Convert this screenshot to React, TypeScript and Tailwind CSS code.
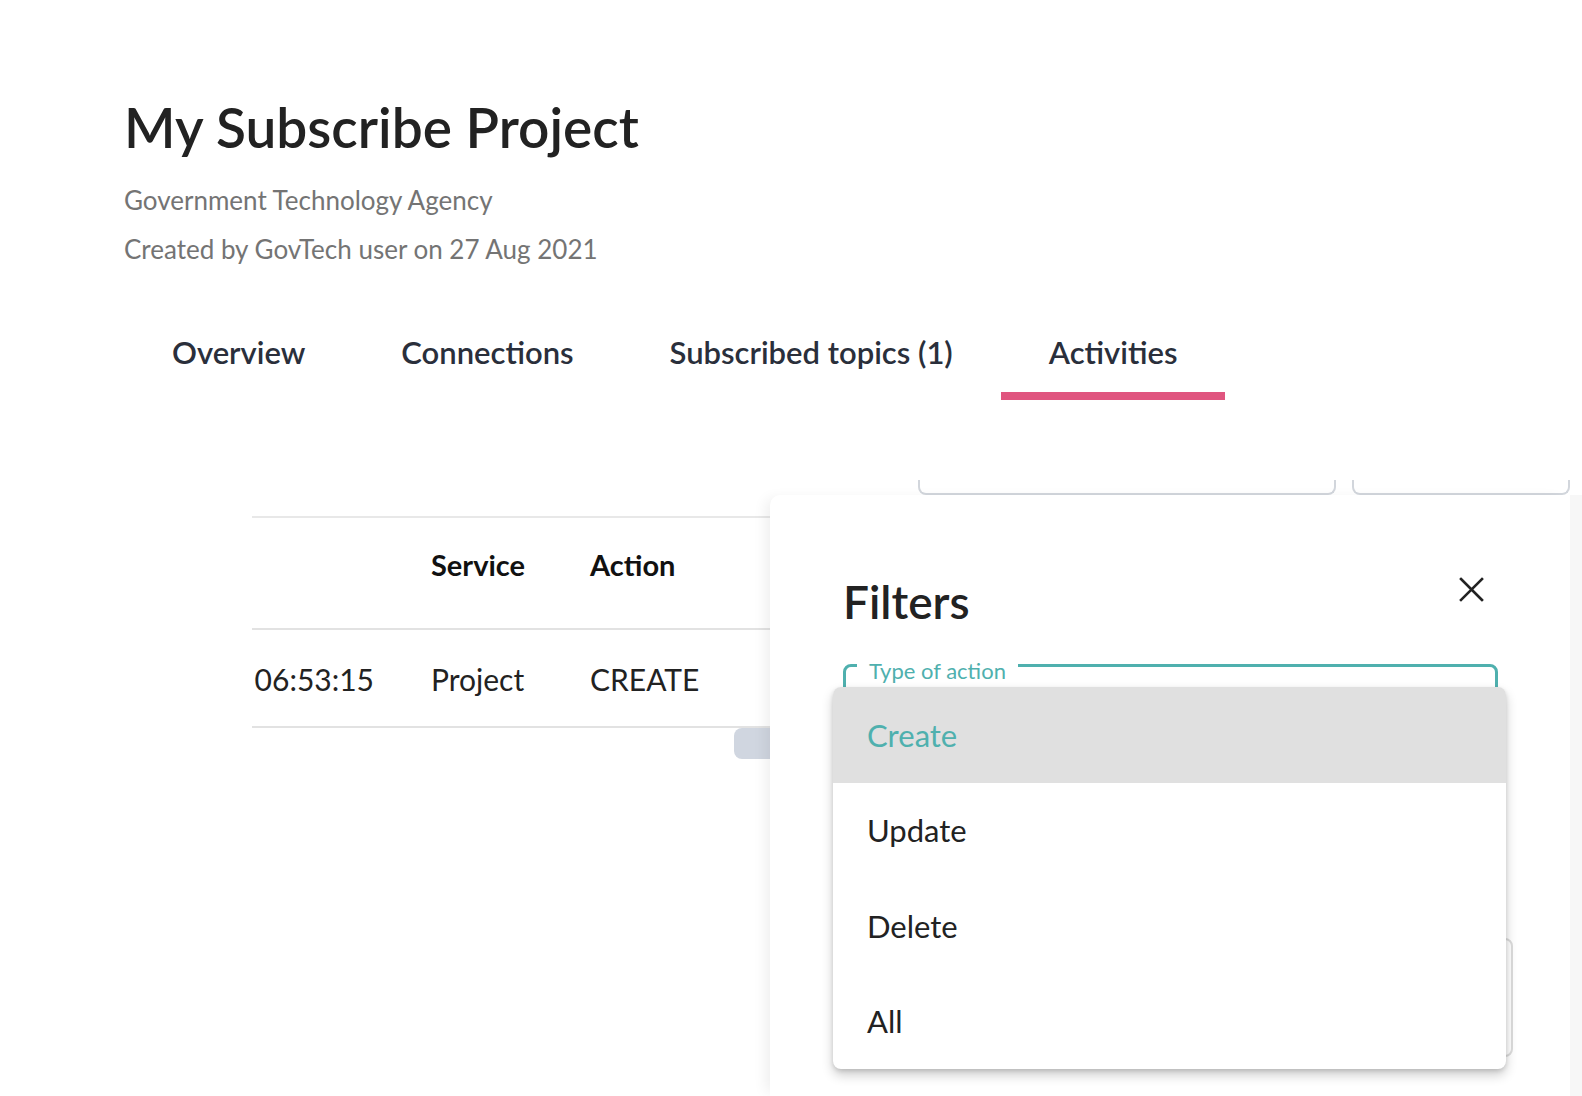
import React from 'react'

const tabs = ['Overview', 'Connections', 'Subscribed topics (1)', 'Activities']
const actions = ['Create', 'Update', 'Delete', 'All']

const CloseIcon = () => (
  <svg width="25" height="25" viewBox="0 0 25 25" fill="none">
    <path d="M2 2L23 23M23 2L2 23" stroke="#222" strokeWidth="2.6" strokeLinecap="square" />
  </svg>
)

export default function App() {
  return (
    <div className="relative h-[1096px] w-full overflow-hidden bg-white font-['Lato',sans-serif]">
      {/* Project header */}
      <div className="pl-[124px] pt-[100px]">
        <h1 className="text-[55px] font-semibold leading-none text-[#222222]">My Subscribe Project</h1>
        <div className="mt-[21px] text-[26px] leading-[49px] text-[#747474]">
          <div>Government Technology Agency</div>
          <div>Created by GovTech user on 27 Aug 2021</div>
        </div>

        {/* Tabs */}
        <div className="mt-[63px] flex">
          {tabs.map((tab) => (
            <div key={tab} className="flex flex-col">
              <div className="px-[48px] text-[31px] font-semibold leading-none text-[#2a2f3b]">{tab}</div>
              <div
                className={`mt-[24px] h-[8px] ${tab === 'Activities' ? 'bg-[#e0557f]' : 'bg-transparent'}`}
              />
            </div>
          ))}
        </div>
      </div>

      {/* Toolbar inputs (partly hidden) */}
      <div className="mt-[80px] flex h-[15px] pl-[918px]">
        <div className="w-[418px] rounded-b-lg border-x-2 border-b-2 border-[#d2d6dc]" />
        <div className="ml-[16px] w-[218px] rounded-b-lg border-x-2 border-b-2 border-[#d2d6dc]" />
      </div>

      {/* Activities table, scrolled horizontally */}
      <div className="mt-[21px] ml-[252px] w-[620px] overflow-hidden">
        <div className="border-t-2 border-[#e8e8e8]">
          <div className="flex h-[110px] items-start pt-[32px] text-[29px] font-bold leading-none text-[#111111]">
            <div className="w-[179px]" />
            <div className="w-[159px] shrink-0">Service</div>
            <div className="w-[200px] shrink-0">Action</div>
          </div>
          <div className="flex h-[98px] items-start border-t-2 border-[#e2e2e2] pt-[34px] text-[30px] leading-none text-[#222222]">
            <div className="flex w-[179px] shrink-0 justify-end pr-[57px]">
              <span className="whitespace-nowrap">27 Aug 2021, 06:53:15</span>
            </div>
            <div className="w-[159px] shrink-0">Project</div>
            <div className="w-[200px] shrink-0">CREATE</div>
          </div>
          <div className="border-t-2 border-[#e2e2e2]">
            <div className="ml-[482px] h-[31px] w-[80px] rounded-lg bg-[#d0d6e0]" />
          </div>
        </div>
      </div>

      {/* Filters drawer */}
      <div className="absolute top-[495px] bottom-0 left-[770px] right-0 flex">
        <div className="relative flex-1 rounded-tl-[10px] bg-white pl-[73px] shadow-[-8px_0_14px_-4px_rgba(0,0,0,0.07)]">
          <div className="flex items-start justify-between pt-[84px] pr-[86px]">
            <h2 className="text-[46px] font-semibold leading-none text-[#222222]">Filters</h2>
            <button className="-mt-[2px]">
              <CloseIcon />
            </button>
          </div>

          <div className="relative mt-[39px] h-[120px] w-[655px] rounded-lg border-[3px] border-[#4fb0ae]">
            <div className="absolute -top-[3px] left-[11px] h-[3px] w-[161px] bg-white" />
            <span className="absolute -top-[7px] left-[23px] text-[22px] leading-none text-[#4fb0ae]">
              Type of action
            </span>
          </div>

          <div className="mt-[154px] h-[119px] w-[670px] rounded-lg border-2 border-[#dcdcdc]" />

          {/* Select menu */}
          <div className="absolute top-[192px] left-[63px] w-[673px] overflow-hidden rounded-lg bg-white shadow-[0_6px_12px_rgba(0,0,0,0.2),0_2px_4px_rgba(0,0,0,0.12)]">
            {actions.map((a, i) => (
              <div
                key={a}
                className={`flex h-[95.5px] items-center pl-[34px] text-[31px] ${
                  i === 0 ? 'bg-[#e0e0e0] text-[#4fb0ae]' : 'text-[#222222]'
                }`}
              >
                {a}
              </div>
            ))}
          </div>
        </div>
        <div className="w-[12px] bg-[#f7f7f7]" />
      </div>
    </div>
  )
}
